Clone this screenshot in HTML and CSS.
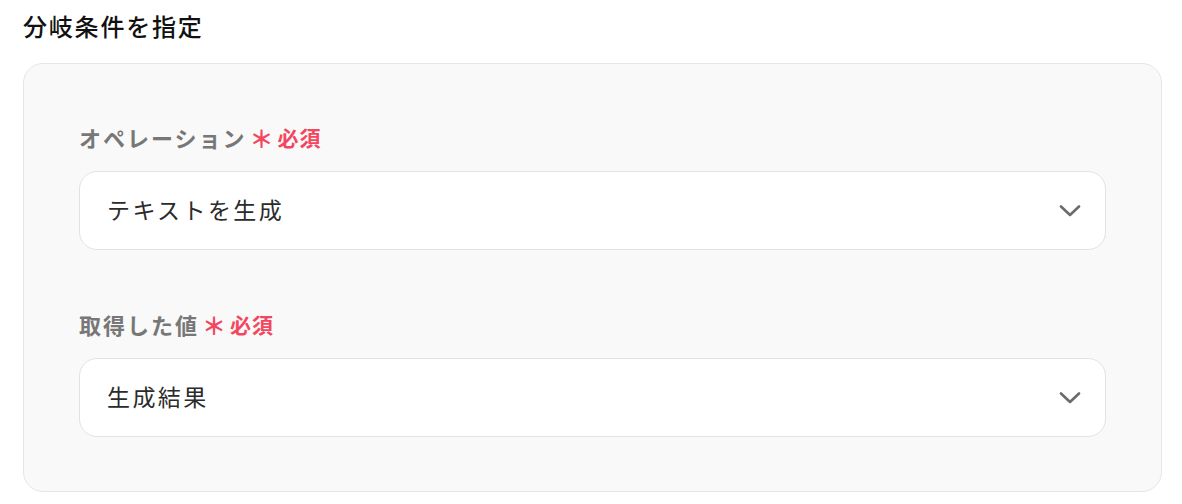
FILE: index.html
```html
<!DOCTYPE html>
<html lang="ja">
<head>
    <meta charset="UTF-8">
    <meta name="viewport" content="width=device-width, initial-scale=1.0">
    <title>分岐条件を指定</title>
    <link rel="stylesheet" href="styles.css">
</head>
<body>
    <div class="page">
        <h2 class="title">分岐条件を指定</h2>

        <div class="card">
            <div class="field">
                <div class="label">
                    オペレーション
                    <span class="required"><span class="mark">＊</span>必須</span>
                </div>
                <div class="select">
                    <span class="select-value">テキストを生成</span>
                    <svg class="chevron" width="22" height="12" viewBox="0 0 22 12">
                        <path d="M2 1.5 L11 10 L20 1.5" fill="none" stroke="#6b6b6b" stroke-width="2.6" stroke-linecap="round" stroke-linejoin="round"/>
                    </svg>
                </div>
            </div>

            <div class="field">
                <div class="label">
                    取得した値
                    <span class="required"><span class="mark">＊</span>必須</span>
                </div>
                <div class="select">
                    <span class="select-value">生成結果</span>
                    <svg class="chevron" width="22" height="12" viewBox="0 0 22 12">
                        <path d="M2 1.5 L11 10 L20 1.5" fill="none" stroke="#6b6b6b" stroke-width="2.6" stroke-linecap="round" stroke-linejoin="round"/>
                    </svg>
                </div>
            </div>
        </div>
    </div>
</body>
</html>
```

FILE: styles.css
```css
* {
    margin: 0;
    padding: 0;
    box-sizing: border-box;
}

body {
    font-family: "Noto Sans CJK JP", "Noto Sans", sans-serif;
    background: #fff;
    color: #1a1a1a;
}

.page {
    padding: 8px 20px 0 23px;
}

.title {
    font-size: 24px;
    font-weight: 500;
    line-height: 36px;
    letter-spacing: 1.8px;
    color: #111;
}

.card {
    margin-top: 19px;
    background: #f9f9f9;
    border: 1px solid #e6e6e6;
    border-radius: 20px;
    padding: 58px 55px 54px 55px;
    display: flex;
    flex-direction: column;
    gap: 59px;
}

/* Поле формы */
.label {
    display: flex;
    align-items: center;
    height: 30px;
    font-size: 22px;
    font-weight: 700;
    letter-spacing: 2px;
    color: #777;
    margin-bottom: 19px;
}

.required {
    display: flex;
    align-items: center;
    margin-left: 3px;
    font-size: 21px;
    font-weight: 700;
    color: #f2475e;
    letter-spacing: 1px;
}

.mark {
    font-size: 24px;
    margin-right: 3px;
}

.select {
    height: 79px;
    background: #fff;
    border: 1px solid #e0e2e6;
    border-radius: 18px;
    display: flex;
    align-items: center;
    justify-content: space-between;
    padding: 0 24px 0 27px;
}

.select-value {
    font-size: 23px;
    letter-spacing: 2.4px;
    color: #2b2b2b;
    margin-top: -3px;
}

.chevron {
    display: block;
}
```
